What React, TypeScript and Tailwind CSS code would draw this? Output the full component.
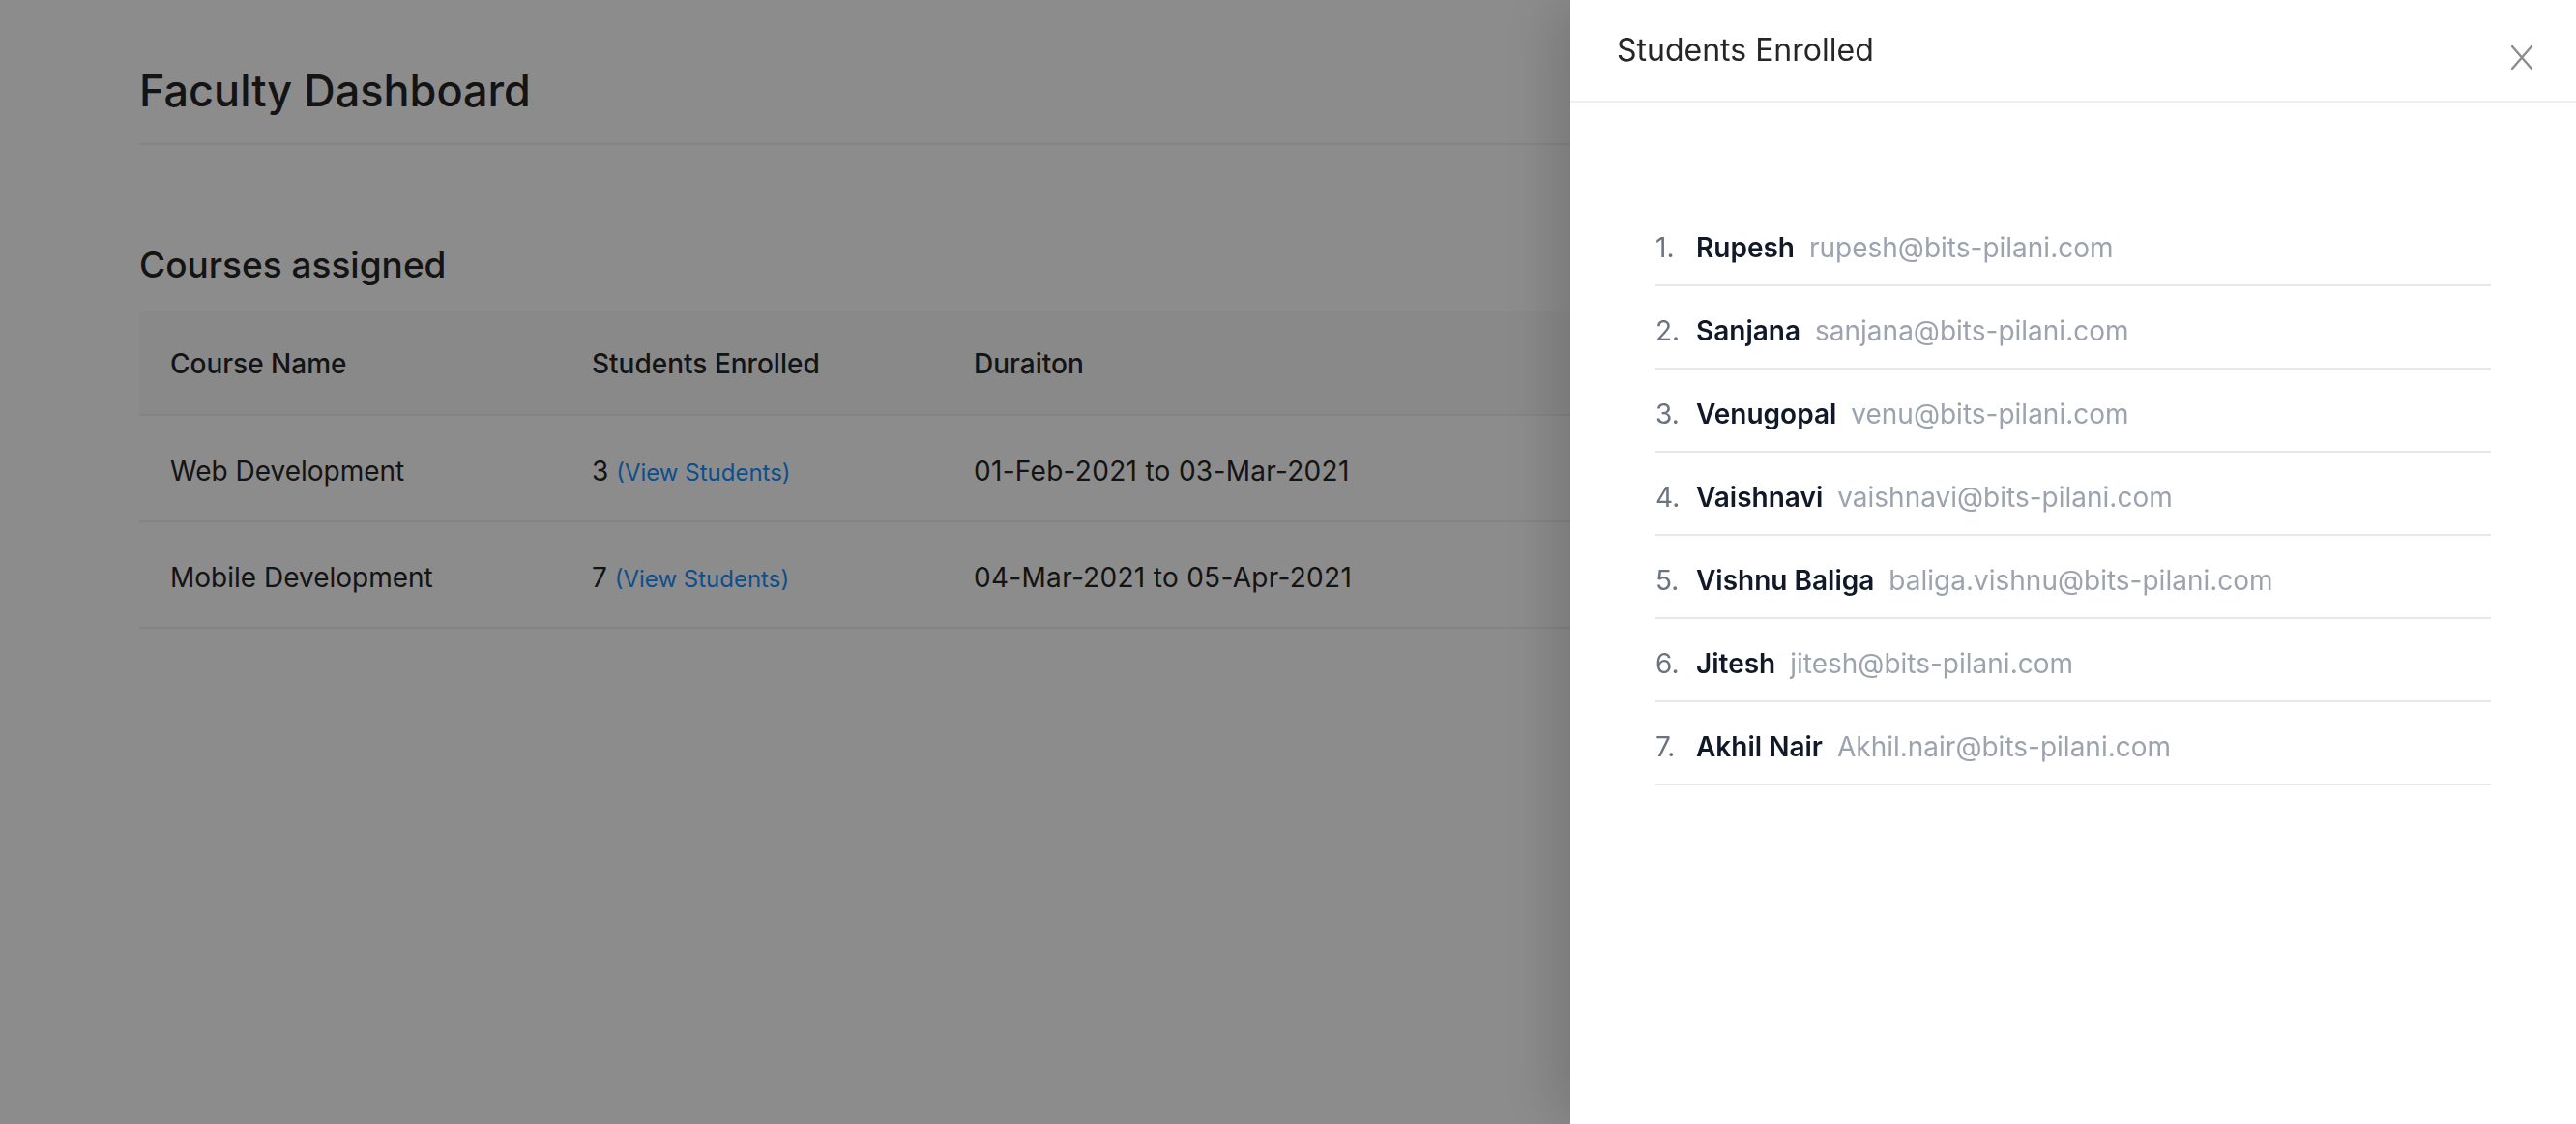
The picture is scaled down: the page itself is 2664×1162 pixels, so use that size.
const courses = [
  { name: 'Web Development', students: 3, duration: '01-Feb-2021 to 03-Mar-2021' },
  { name: 'Mobile Development', students: 7, duration: '04-Mar-2021 to 05-Apr-2021' },
];

const students = [
  { name: 'Rupesh', email: 'rupesh@bits-pilani.com' },
  { name: 'Sanjana', email: 'sanjana@bits-pilani.com' },
  { name: 'Venugopal', email: 'venu@bits-pilani.com' },
  { name: 'Vaishnavi', email: 'vaishnavi@bits-pilani.com' },
  { name: 'Vishnu Baliga', email: 'baliga.vishnu@bits-pilani.com' },
  { name: 'Jitesh', email: 'jitesh@bits-pilani.com' },
  { name: 'Akhil Nair', email: 'Akhil.nair@bits-pilani.com' },
];

function CoursesTable() {
  return (
    <div className="mt-[24px] text-[28px] leading-[44px] text-[#262626]">
      <div className="grid grid-cols-[436px_395px_1fr] bg-[#fafafa] border-b-2 border-[#f0f0f0] font-medium">
        <div className="px-[32px] pt-[32px] pb-[30px]">Course Name</div>
        <div className="px-[32px] pt-[32px] pb-[30px]">Students Enrolled</div>
        <div className="px-[32px] pt-[32px] pb-[30px]">Duraiton</div>
      </div>
      {courses.map((c) => (
        <div key={c.name} className="grid grid-cols-[436px_395px_1fr] border-b-2 border-[#f0f0f0]">
          <div className="px-[32px] pt-[35px] pb-[27px]">{c.name}</div>
          <div className="px-[32px] pt-[35px] pb-[27px]">
            {c.students} <span className="text-[24px] text-[#1890ff]">(View Students)</span>
          </div>
          <div className="px-[32px] pt-[35px] pb-[27px] tracking-[0.3px]">{c.duration}</div>
        </div>
      ))}
    </div>
  );
}

function StudentsDrawer() {
  return (
    <div className="fixed top-0 right-0 h-full w-[1040px] bg-white shadow-[-12px_0_60px_0_rgba(0,0,0,0.18)] flex flex-col">
      <div className="flex items-start justify-between border-b-2 border-[#f0f0f0] pl-[48px] pr-[45px] pt-[30px] pb-[30px]">
        <h2 className="text-[32px] leading-[44px] text-[#262626]">Students Enrolled</h2>
        <button className="mt-[17px]">
          <svg width="22" height="25" viewBox="0 0 22 25" fill="none">
            <path d="M1 1L21 24M21 1L1 24" stroke="#8c8c8c" strokeWidth="2.4" strokeLinecap="round" />
          </svg>
        </button>
      </div>
      <div className="pt-[104px] px-[88px]">
        <ol>
          {students.map((s, i) => (
            <li
              key={s.email}
              className="flex items-center border-b-2 border-[#e5e7eb] pt-[26px] pb-[18px] text-[28px] leading-[40px]"
            >
              <span className="w-[42px] text-[#6b7280]">{i + 1}.</span>
              <span className="font-semibold text-[#111827]">{s.name}</span>
              <span className="ml-[15px] text-[#9ca3af]">{s.email}</span>
            </li>
          ))}
        </ol>
      </div>
    </div>
  );
}

export default function App() {
  return (
    <div className="relative min-h-[1162px] bg-white font-['Inter',sans-serif]">
      <div className="px-[144px]">
        <h1 className="pt-[62px] text-[45px] leading-[64px] font-medium text-[#262626]">Faculty Dashboard</h1>
        <div className="mt-[22px] border-b-2 border-[#f0f0f0]" />
        <h3 className="mt-[100px] text-[37px] leading-[48px] font-medium text-[#262626]">Courses assigned</h3>
        <CoursesTable />
      </div>

      <div className="fixed inset-0 bg-black/45" />
      <StudentsDrawer />
    </div>
  );
}
